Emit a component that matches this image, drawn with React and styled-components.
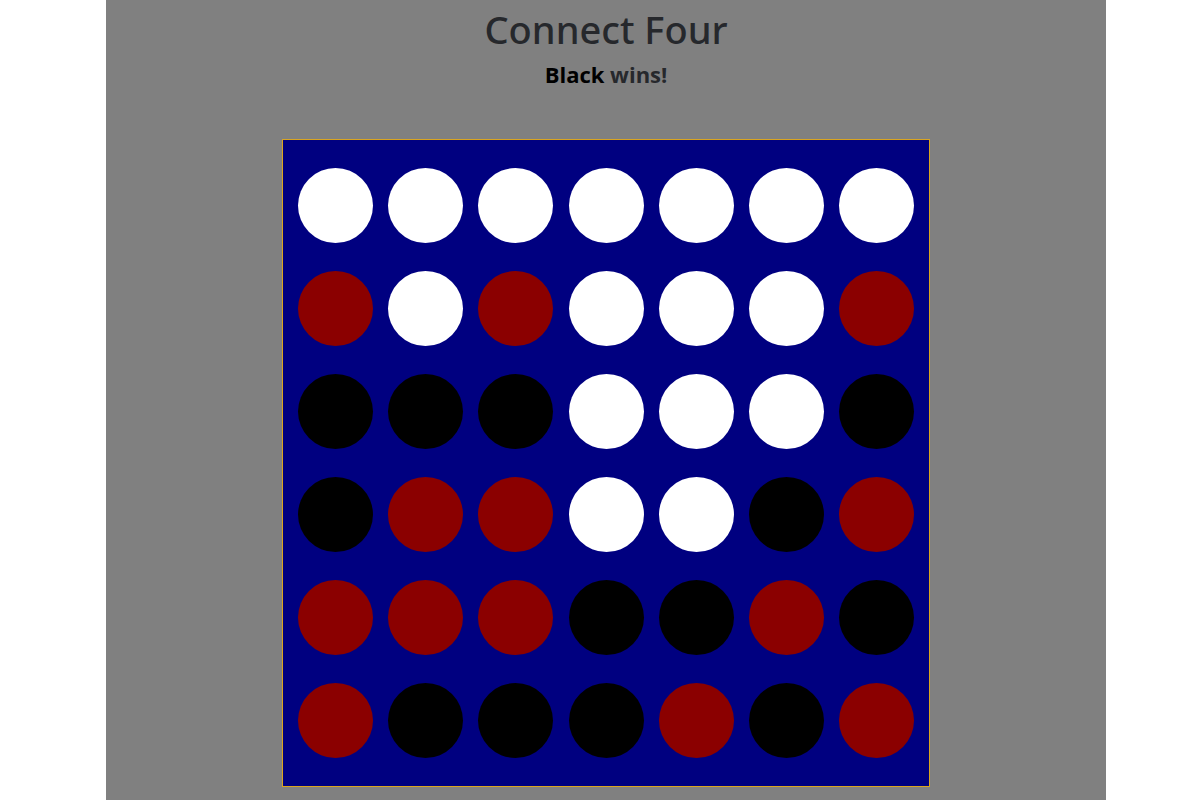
import React from 'react';
import styled, {createGlobalStyle} from 'styled-components';

const GlobalStyle = createGlobalStyle`
  html, body {
    margin: 0;
    padding: 0;
    background: #ffffff;
  }
  body {
    font-family: "Open Sans", "Noto Sans", "Liberation Sans", sans-serif;
    color: #212529;
  }
`;

const board = [
  ['empty', 'empty', 'empty', 'empty', 'empty', 'empty', 'empty'],
  ['red', 'empty', 'red', 'empty', 'empty', 'empty', 'red'],
  ['black', 'black', 'black', 'empty', 'empty', 'empty', 'black'],
  ['black', 'red', 'red', 'empty', 'empty', 'black', 'red'],
  ['red', 'red', 'red', 'black', 'black', 'red', 'black'],
  ['red', 'black', 'black', 'black', 'red', 'black', 'red'],
];

const discColors = {
  empty: '#ffffff',
  red: '#8b0000',
  black: '#000000',
};

export default function App() {
  return (
    <>
      <GlobalStyle />
      <Page>
        <Panel>
          <Title>Connect Four</Title>
          <Status>
            <Winner>Black</Winner> wins!
          </Status>
          <Board>
            {board.map((row, r) =>
              row.map((cell, c) => (
                <Disc key={`${r}-${c}`} $color={discColors[cell]} />
              ))
            )}
          </Board>
        </Panel>
      </Page>
    </>
  );
}

const Page = styled.div`
  min-height: 800px;
  padding-left: 12px;
  display: flex;
  justify-content: center;
`;

const Panel = styled.main`
  width: 1000px;
  min-height: 800px;
  background-color: #808080;
  display: flex;
  flex-direction: column;
  align-items: center;
`;

const Title = styled.h1`
  margin: 4px 0 0;
  font-family: "Noto Sans", "Open Sans", sans-serif;
  font-size: 38px;
  font-weight: 500;
  line-height: 50px;
  color: #26282c;
`;

const Status = styled.h4`
  margin: 5px 0 0;
  font-size: 22px;
  font-weight: 700;
  line-height: 30px;
  color: #26282c;
`;

const Winner = styled.span`
  color: #000000;
`;

const Board = styled.div`
  margin-top: 50px;
  width: 646px;
  height: 646px;
  border: 1px solid #daa520;
  background-color: #000080;
  display: grid;
  grid-template-columns: repeat(7, 75px);
  grid-template-rows: repeat(6, 75px);
  justify-content: space-evenly;
  align-content: space-evenly;
`;

const Disc = styled.div`
  width: 75px;
  height: 75px;
  border-radius: 50%;
  background-color: ${(p) => p.$color};
`;
